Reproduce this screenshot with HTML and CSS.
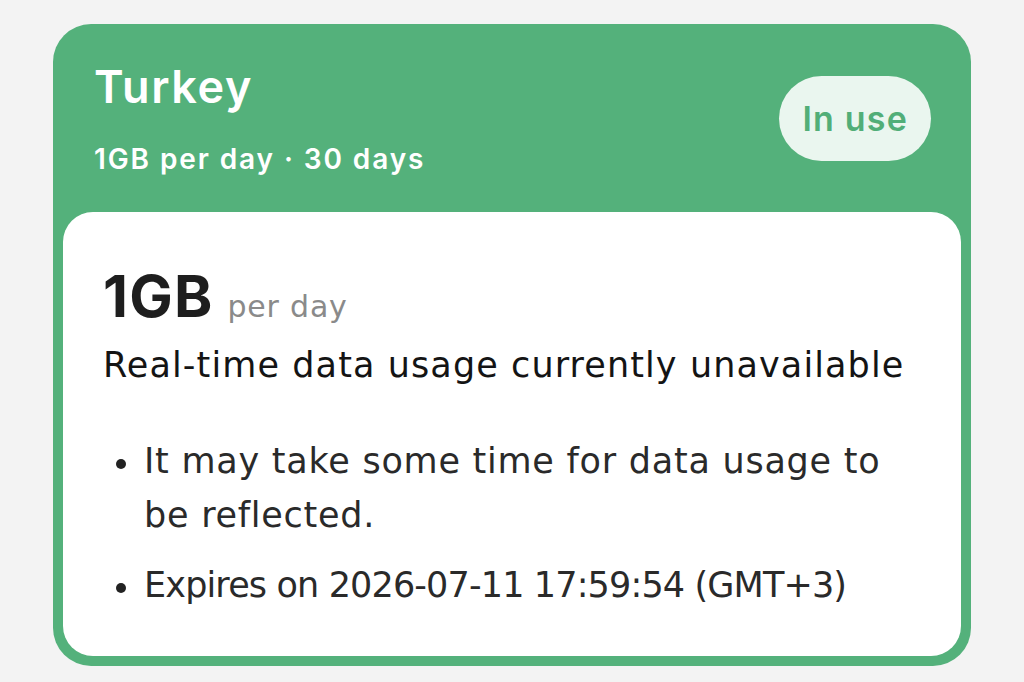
FILE: index.html
```html
<!DOCTYPE html>
<html lang="en">
<head>
<meta charset="utf-8">
<title>Turkey plan</title>
<link rel="stylesheet" href="styles.css">
</head>
<body>
<div class="page">
  <section class="card">
    <header class="card-head">
      <div class="plan">
        <h1 class="plan-name">Turkey</h1>
        <p class="plan-meta">1GB per day · 30 days</p>
      </div>
      <span class="badge">In use</span>
    </header>
    <div class="card-body">
      <div class="amount">
        <span class="amount-value">1GB</span>
        <span class="amount-unit">per day</span>
      </div>
      <p class="usage-note">Real-time data usage currently unavailable</p>
      <ul class="notes">
        <li class="note">It may take some time for data usage to be reflected.</li>
        <li class="note note-expiry">Expires on 2026-07-11 17:59:54 (GMT+3)</li>
      </ul>
    </div>
  </section>
</div>
</body>
</html>
```
FILE: styles.css
```css
html, body {
  margin: 0;
  padding: 0;
  background: #f3f3f3;
}

body {
  font-family: "DejaVu Sans", "Inter", sans-serif;
  color: #1c1c1c;
}

.page {
  padding: 24px 53px 0;
}

.card {
  background: #54b17b;
  border-radius: 38px;
  padding: 0 10px 10px;
}

.card-head {
  height: 188px;
  display: flex;
  align-items: center;
  justify-content: space-between;
  padding: 0 30px 0 31px;
}

.plan {
  display: flex;
  flex-direction: column;
  gap: 26px;
}

.plan-name {
  margin: 0;
  font-family: "Inter", sans-serif;
  font-weight: 600;
  font-size: 45px;
  line-height: 56px;
  letter-spacing: 1.6px;
  color: #ffffff;
}

.plan-meta {
  margin: 0;
  font-family: "Inter", sans-serif;
  font-weight: 600;
  font-size: 28px;
  line-height: 36px;
  letter-spacing: 1.9px;
  color: #ffffff;
}

.badge {
  height: 85px;
  padding: 0 23px;
  border-radius: 43px;
  background: #eaf6ef;
  color: #52ae78;
  display: flex;
  align-items: center;
  font-family: "Inter", sans-serif;
  font-weight: 600;
  font-size: 34px;
  letter-spacing: 1.2px;
}

.card-body {
  background: #ffffff;
  border-radius: 30px;
  padding: 52px 40px 44px 40px;
}

.amount {
  display: flex;
  align-items: baseline;
  height: 64px;
  line-height: 64px;
}

.amount-value {
  font-family: "Inter", sans-serif;
  font-weight: 700;
  font-size: 58px;
  letter-spacing: 1.2px;
  color: #1e1e1e;
}

.amount-unit {
  margin-left: 14px;
  font-size: 30px;
  letter-spacing: 0.8px;
  color: #8a8a8a;
}

.usage-note {
  margin: 15px 0 0;
  font-size: 35px;
  line-height: 44px;
  letter-spacing: 1.1px;
  color: #141414;
}

.notes {
  list-style: none;
  margin: 47px 0 0;
  padding: 0 0 0 13px;
  display: flex;
  flex-direction: column;
  gap: 16px;
}

.note {
  display: flex;
  align-items: flex-start;
  gap: 18px;
  font-size: 35px;
  line-height: 54px;
  letter-spacing: 0.75px;
  color: #2a2a2a;
}

.note-expiry {
  letter-spacing: -0.85px;
}

.note::before {
  content: "";
  flex: none;
  width: 10px;
  height: 10px;
  margin-top: 25px;
  border-radius: 50%;
  background: #222222;
}
```
